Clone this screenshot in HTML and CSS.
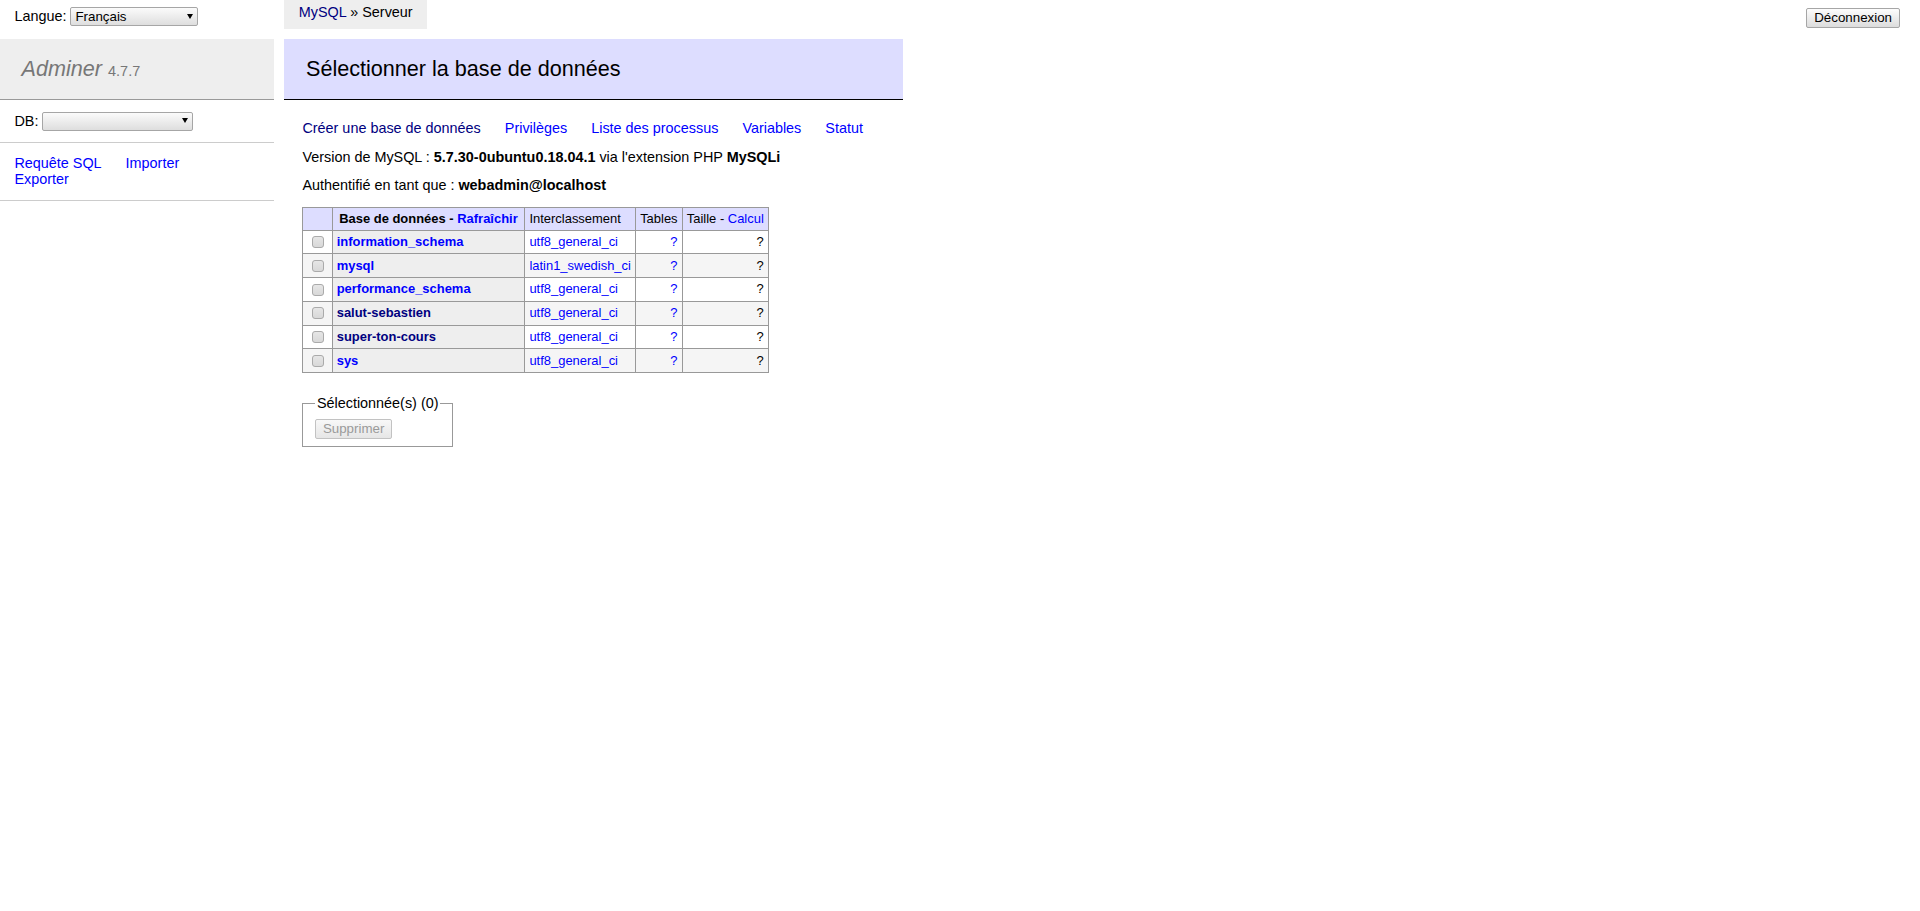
FILE: index.html
```html
<!DOCTYPE html>
<html lang="fr">
<head>
<meta charset="utf-8">
<title>Sélectionner la base de données - Adminer</title>
<link rel="stylesheet" href="styles.css">
</head>
<body>
<div class="top">
  <form class="lang">Langue: <span class="sel sel-lang"><select><option>Français</option></select></span></form>
  <p class="breadcrumb"><a class="v" href="#">MySQL</a> » Serveur</p>
  <div class="top-fill"></div>
  <p class="logout"><button class="btn" type="button">Déconnexion</button></p>
</div>
<div class="main">
  <div class="menu">
    <h1><a class="brand" href="#">Adminer</a> <span class="version">4.7.7</span></h1>
    <p class="dbs"><span title="base de données">DB</span>: <span class="sel sel-db"><select><option></option><option>information_schema</option><option>mysql</option><option>performance_schema</option><option>salut-sebastien</option><option>super-ton-cours</option><option>sys</option></select></span></p>
    <p class="links menu-links"><a href="#">Requête SQL</a> <a href="#">Importer</a> <a href="#">Exporter</a></p>
  </div>
  <div class="content">
    <h2>Sélectionner la base de données</h2>
    <div class="inner">
      <p class="links"><a class="v" href="#">Créer une base de données</a> <a href="#">Privilèges</a> <a href="#">Liste des processus</a> <a href="#">Variables</a> <a href="#">Statut</a></p>
      <p>Version de MySQL : <b>5.7.30-0ubuntu0.18.04.1</b> via l'extension PHP <b>MySQLi</b></p>
      <p>Authentifié en tant que : <b>webadmin@localhost</b></p>
      <table class="dbtable">
        <thead>
          <tr><td></td><th>Base de données - <a href="#">Rafraîchir</a></th><td>Interclassement</td><td>Tables</td><td>Taille - <a href="#">Calcul</a></td></tr>
        </thead>
        <tbody>
          <tr><td><input type="checkbox"></td><th><a href="#">information_schema</a></th><td><a href="#">utf8_general_ci</a></td><td class="r"><a href="#">?</a></td><td class="r">?</td></tr>
          <tr class="odd"><td><input type="checkbox"></td><th><a href="#">mysql</a></th><td><a href="#">latin1_swedish_ci</a></td><td class="r"><a href="#">?</a></td><td class="r">?</td></tr>
          <tr><td><input type="checkbox"></td><th><a href="#">performance_schema</a></th><td><a href="#">utf8_general_ci</a></td><td class="r"><a href="#">?</a></td><td class="r">?</td></tr>
          <tr class="odd"><td><input type="checkbox"></td><th><a class="v" href="#">salut-sebastien</a></th><td><a href="#">utf8_general_ci</a></td><td class="r"><a href="#">?</a></td><td class="r">?</td></tr>
          <tr><td><input type="checkbox"></td><th><a class="v" href="#">super-ton-cours</a></th><td><a href="#">utf8_general_ci</a></td><td class="r"><a href="#">?</a></td><td class="r">?</td></tr>
          <tr class="odd"><td><input type="checkbox"></td><th><a href="#">sys</a></th><td><a href="#">utf8_general_ci</a></td><td class="r"><a href="#">?</a></td><td class="r">?</td></tr>
        </tbody>
      </table>
      <div class="footer">
        <fieldset><legend>Sélectionnée(s) (0)</legend><div><button class="btn" type="button" disabled>Supprimer</button></div></fieldset>
      </div>
    </div>
  </div>
</div>
</body>
</html>
```

FILE: styles.css
```css
body {
  margin: 0;
  color: #000;
  background: #fff;
  font-family: "Liberation Sans", Arial, Helvetica, sans-serif;
  font-size: 14.4px;
}

a { color: #00f; text-decoration: none; }
a.v { color: #000080; }

p { margin: 11.52px 20px 0 0; }

/* top bar */
.top {
  display: flex;
  align-items: flex-start;
  height: 28.8px;
}
.lang {
  flex: none;
  width: 284.4px;
  box-sizing: border-box;
  margin: 0;
  padding: 4.32px 14.4px;
  line-height: 25.92px;
}
.breadcrumb {
  flex: none;
  margin: 0;
  height: 28.8px;
  line-height: 25.92px;
  padding: 0 14.4px;
  background: #eee;
  white-space: nowrap;
}
.top-fill { flex: 1; }
.logout { flex: none; margin: 7.6px 20px 0 0; }

/* selects */
.sel {
  position: relative;
  display: inline-block;
}
.sel select {
  -webkit-appearance: none;
  appearance: none;
  font: 13.33px "Liberation Sans", Arial, sans-serif;
  color: #000;
  height: 19px;
  margin: 0;
  padding: 0 18px 0 4px;
  border: 1px solid #a6a6a6;
  border-radius: 2px;
  background: linear-gradient(#fbfbfb, #dedede);
}
.sel::after {
  content: "";
  position: absolute;
  right: 5px;
  top: 50%;
  margin-top: -3px;
  border-left: 3px solid transparent;
  border-right: 3px solid transparent;
  border-top: 5px solid #000;
  pointer-events: none;
}
.sel-lang select { width: 128px; }
.sel-db select { width: 151px; }

/* buttons */
.btn {
  font: 13.33px "Liberation Sans", Arial, sans-serif;
  color: #000;
  margin: 0;
  padding: 1px 7px;
  height: 20px;
  border: 1px solid #a6a6a6;
  border-radius: 2px;
  background: linear-gradient(#fdfdfd, #dcdcdc);
}
.btn:disabled {
  color: #9a9a9a;
  border-color: #c2c2c2;
  background: linear-gradient(#f8f8f8, #e6e6e6);
}

/* layout */
.main {
  display: flex;
  align-items: flex-start;
  margin-top: 10px;
}
.menu {
  flex: none;
  width: 273.6px;
}
.menu h1 {
  margin: 0;
  font-size: 21.6px;
  font-weight: normal;
  color: #777;
  background: #eee;
  padding: 17.28px 21.6px;
  border-bottom: 1px solid #999;
}
.brand { color: #777; font-style: italic; }
.version { font-size: 14.47px; color: #777; }
.menu p {
  margin: 0;
  padding: 11.52px 14.4px;
  border-bottom: 1px solid #ccc;
}
.menu .menu-links { line-height: 16.6px; }
.links a { margin-right: 20px; white-space: nowrap; }

.content {
  flex: none;
  margin-left: 10.8px;
  padding: 0 20px 20px 0;
}
.content h2 {
  margin: 0 0 20px;
  font-size: 21.6px;
  font-weight: normal;
  color: #000;
  background: #ddf;
  padding: 17.28px 21.6px;
  border-bottom: 1px solid #000;
}
.inner { padding-left: 18px; }
.inner p { line-height: 17px; }

/* table */
.dbtable {
  border-collapse: collapse;
  font-size: 12.96px;
  line-height: 16.2px;
  margin: 12.96px 20px 0 0;
}
.dbtable td, .dbtable th {
  border: 1px solid #999;
  padding: 2.592px 4.1px;
}
.dbtable th { background: #eee; text-align: left; }
.dbtable thead th { text-align: center; padding: 2.592px 6.6px; }
.dbtable thead td, .dbtable thead th { background: #ddf; }
.dbtable .odd td { background: #f5f5f5; }
.dbtable .r { text-align: right; }
.dbtable input[type="checkbox"] {
  -webkit-appearance: none;
  appearance: none;
  box-sizing: border-box;
  width: 12px;
  height: 12px;
  margin: 2.8px 3px 2.8px 5px;
  vertical-align: middle;
  border: 1px solid #aaa;
  border-radius: 3px;
  background: linear-gradient(#e6e6e6, #d8d8d8);
}

/* footer */
.footer { padding-top: 22px; }
.footer fieldset {
  display: inline-block;
  vertical-align: top;
  margin: 0 7.2px 0 0;
  padding: 7.6px 11.52px 7.2px;
  border: 1px solid #999;
}
.footer legend { padding: 0 2px; }
```
